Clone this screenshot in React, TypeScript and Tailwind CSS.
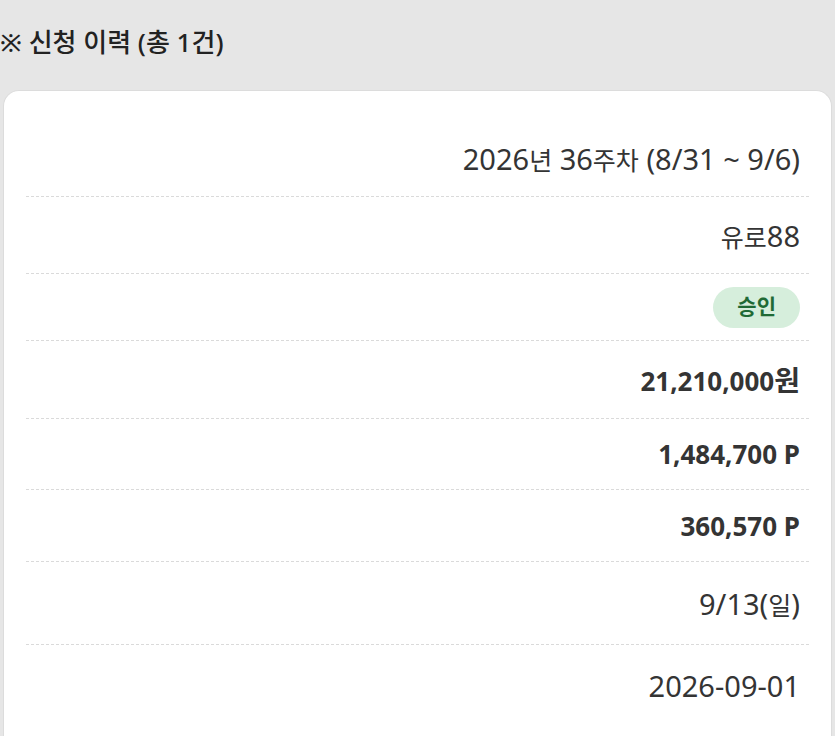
import React from "react";

type Row = {
  value: React.ReactNode;
  h: string;
  kind: "text" | "bold" | "badge";
  last?: boolean;
};

// Hangul runs are drawn a little smaller than the Latin digits, as in the app font
const K: React.FC<{ children: React.ReactNode }> = ({ children }) => (
  <span className="text-[25px]">{children}</span>
);

const rows: Row[] = [
  {
    value: (
      <>
        2026<K>년</K> 36<K>주차</K> (8/31 ~ 9/6)
      </>
    ),
    h: "h-[77px]",
    kind: "text",
  },
  {
    value: (
      <>
        <K>유로</K>88
      </>
    ),
    h: "h-[77px]",
    kind: "text",
  },
  { value: "승인", h: "h-[67px]", kind: "badge" },
  {
    value: (
      <>
        21,210,000<span className="text-[28px]">원</span>
      </>
    ),
    h: "h-[78px]",
    kind: "bold",
  },
  { value: "1,484,700 P", h: "h-[71px]", kind: "bold" },
  { value: "360,570 P", h: "h-[72px]", kind: "bold" },
  {
    value: (
      <>
        9/13(<K>일</K>)
      </>
    ),
    h: "h-[83px]",
    kind: "text",
  },
  { value: "2026-09-01", h: "h-[80px]", kind: "text", last: true },
];

const App: React.FC = () => {
  return (
    <div
      className="min-h-screen bg-[#e6e6e6] text-[#343434]"
      style={{ fontFamily: '"Noto Sans", "Noto Sans CJK KR", sans-serif' }}
    >
      <div className="h-[84px] flex items-center">
        <h2 className="text-[26px] font-medium text-[#222222]">
          ※ 신청 이력 (총 1건)
        </h2>
      </div>

      <div className="mt-[6px] mx-[3px] bg-white rounded-t-[16px] border border-[#dcdcdc] border-b-0 px-[22px] pt-[29px] min-h-[646px]">
        {rows.map((row, i) => (
          <div
            key={i}
            className={`${row.h} flex items-center justify-end pr-[9px] ${
              row.last ? "" : "border-b border-dashed border-[#dadada]"
            }`}
          >
            {row.kind === "badge" ? (
              <span className="h-[41px] px-[24px] rounded-full bg-[#d6eedc] text-[#1f6a35] text-[21px] font-bold flex items-center">
                {row.value}
              </span>
            ) : row.kind === "bold" ? (
              <span className="text-[26px] font-bold leading-none">
                {row.value}
              </span>
            ) : (
              <span className="text-[29px] font-normal leading-none">
                {row.value}
              </span>
            )}
          </div>
        ))}
      </div>
    </div>
  );
};

export default App;
